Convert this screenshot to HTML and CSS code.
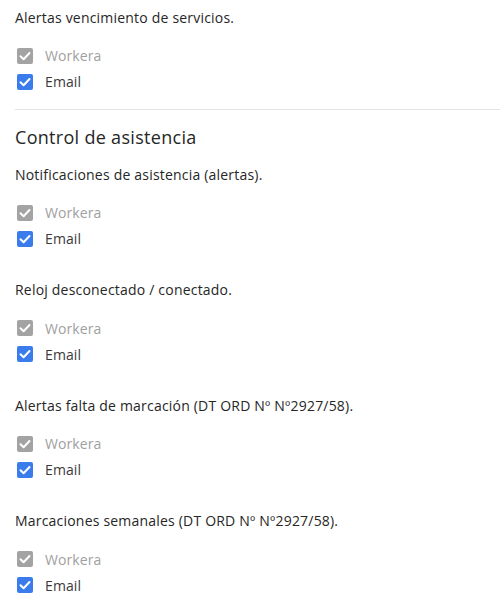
FILE: index.html
```html
<!DOCTYPE html>
<html lang="es">
<head>
<meta charset="utf-8">
<link rel="stylesheet" href="styles.css">
</head>
<body>
<div class="page">
  <div class="group first">
    <p class="label">Alertas vencimiento de servicios.</p>
    <div class="options">
      <label class="opt disabled"><span class="box gray"><svg viewBox="0 0 16 16"><path d="M3.5 8.2 L6.6 11.2 L12.5 5"/></svg></span>Workera</label>
      <label class="opt"><span class="box blue"><svg viewBox="0 0 16 16"><path d="M3.5 8.2 L6.6 11.2 L12.5 5"/></svg></span>Email</label>
    </div>
  </div>
  <hr class="divider">
  <h2 class="section">Control de asistencia</h2>
  <div class="group">
    <p class="label">Notificaciones de asistencia (alertas).</p>
    <div class="options">
      <label class="opt disabled"><span class="box gray"><svg viewBox="0 0 16 16"><path d="M3.5 8.2 L6.6 11.2 L12.5 5"/></svg></span>Workera</label>
      <label class="opt"><span class="box blue"><svg viewBox="0 0 16 16"><path d="M3.5 8.2 L6.6 11.2 L12.5 5"/></svg></span>Email</label>
    </div>
  </div>
  <div class="group">
    <p class="label">Reloj desconectado / conectado.</p>
    <div class="options">
      <label class="opt disabled"><span class="box gray"><svg viewBox="0 0 16 16"><path d="M3.5 8.2 L6.6 11.2 L12.5 5"/></svg></span>Workera</label>
      <label class="opt"><span class="box blue"><svg viewBox="0 0 16 16"><path d="M3.5 8.2 L6.6 11.2 L12.5 5"/></svg></span>Email</label>
    </div>
  </div>
  <div class="group">
    <p class="label">Alertas falta de marcación (DT ORD Nº Nº2927/58).</p>
    <div class="options">
      <label class="opt disabled"><span class="box gray"><svg viewBox="0 0 16 16"><path d="M3.5 8.2 L6.6 11.2 L12.5 5"/></svg></span>Workera</label>
      <label class="opt"><span class="box blue"><svg viewBox="0 0 16 16"><path d="M3.5 8.2 L6.6 11.2 L12.5 5"/></svg></span>Email</label>
    </div>
  </div>
  <div class="group">
    <p class="label">Marcaciones semanales (DT ORD Nº Nº2927/58).</p>
    <div class="options">
      <label class="opt disabled"><span class="box gray"><svg viewBox="0 0 16 16"><path d="M3.5 8.2 L6.6 11.2 L12.5 5"/></svg></span>Workera</label>
      <label class="opt"><span class="box blue"><svg viewBox="0 0 16 16"><path d="M3.5 8.2 L6.6 11.2 L12.5 5"/></svg></span>Email</label>
    </div>
  </div>
</div>
</body>
</html>
```
FILE: styles.css
```css
html, body {
  margin: 0;
  padding: 0;
  background: #ffffff;
}
body {
  font-family: "Open Sans", "Noto Sans", sans-serif;
  color: #222222;
}
.page {
  padding: 8px 0 0 15px;
}
.group {
  display: flex;
  flex-direction: column;
}
.label {
  margin: 0;
  font-size: 14px;
  line-height: 20px;
  letter-spacing: 0.2px;
  color: #262626;
}
.options {
  display: flex;
  flex-direction: column;
  gap: 10px;
  margin-top: 20px;
  margin-bottom: 33.5px;
}
.group.first .options {
  margin-top: 19.5px;
}
.opt {
  display: flex;
  align-items: center;
  gap: 12px;
  height: 16px;
  font-size: 14px;
  letter-spacing: 0.1px;
  color: #3a3a3a;
  padding-left: 2px;
}
.opt.disabled {
  color: #a0a0a0;
}
.box {
  width: 16px;
  height: 16px;
  border-radius: 2px;
  display: flex;
  align-items: center;
  justify-content: center;
  flex: none;
}
.box svg {
  width: 16px;
  height: 16px;
  fill: none;
  stroke: #ffffff;
  stroke-width: 2;
  stroke-linecap: round;
  stroke-linejoin: round;
}
.box.gray { background: #a3a3a3; }
.box.blue { background: #3a7cec; }
.divider {
  margin: -14.5px 0 0 0;
  border: 0;
  border-top: 1px solid #e3e3e3;
}
.section {
  margin: 15px 0 16px 0;
  font-size: 18px;
  line-height: 24px;
  letter-spacing: 0.3px;
  font-weight: 400;
  color: #262626;
}
```
